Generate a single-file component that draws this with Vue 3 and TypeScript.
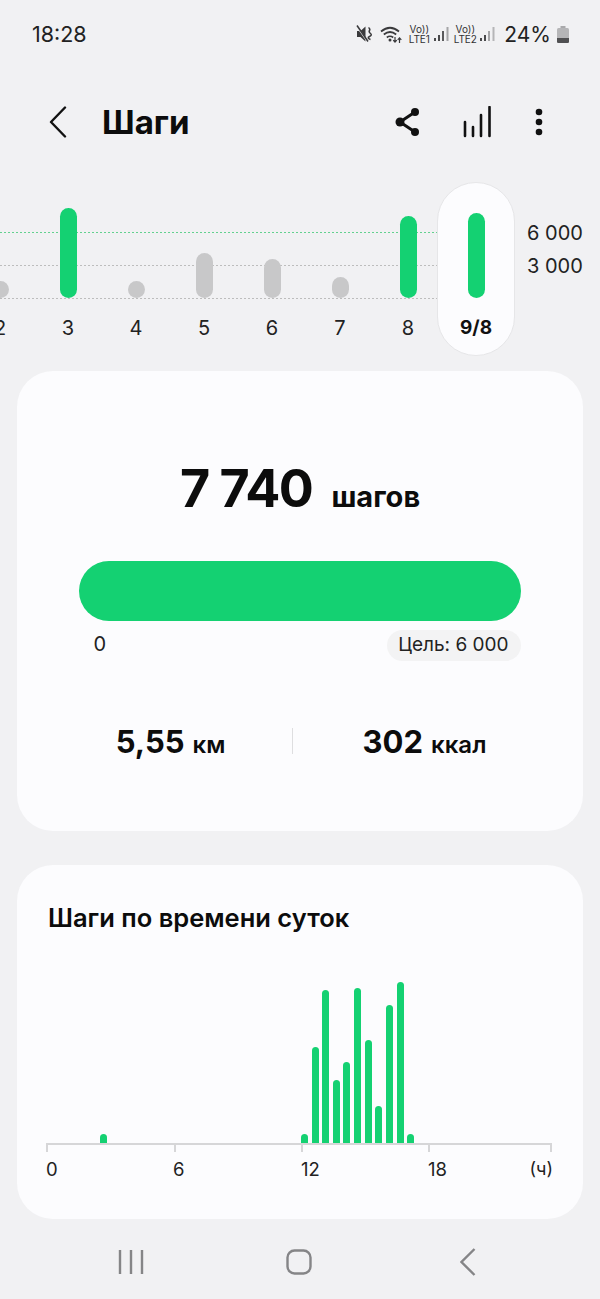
<script setup lang="ts">
interface DayBar {
  label: string
  height: number
  goal: boolean
  selected?: boolean
}

interface HourBar {
  x: number
  top: number
}

const days: DayBar[] = [
  { label: '2', height: 17, goal: false },
  { label: '3', height: 90, goal: true },
  { label: '4', height: 17, goal: false },
  { label: '5', height: 45, goal: false },
  { label: '6', height: 39, goal: false },
  { label: '7', height: 21, goal: false },
  { label: '8', height: 82, goal: true },
  { label: '9/8', height: 85, goal: true, selected: true },
]

// x is the bar centre and top its upper edge, both in page pixels
const hourBars: HourBar[] = [
  { x: 103, top: 1135 },
  { x: 304.5, top: 1135 },
  { x: 315, top: 1048 },
  { x: 325.5, top: 991 },
  { x: 336, top: 1081 },
  { x: 346.8, top: 1063 },
  { x: 357.5, top: 989 },
  { x: 368, top: 1041 },
  { x: 378.5, top: 1107 },
  { x: 389, top: 1006 },
  { x: 400, top: 983 },
  { x: 410.5, top: 1135 },
]

const AXIS_LEFT = 47
const AXIS_Y = 1144

const ticks: number[] = [47, 174.5, 302, 429, 551]
const axisLabels = [
  { text: '0', x: 46 },
  { text: '6', x: 173 },
  { text: '12', x: 301 },
  { text: '18', x: 428 },
]
</script>

<template>
  <div class="screen">
    <div class="status">
      <span class="time">18:28</span>
      <div class="status-right">
        <svg class="ic-mute" width="17" height="18" viewBox="0 0 17 18">
          <path d="M1 6h3.500l5-4.500v15l-5-4.500H1z" fill="#3a3a3c" />
          <path d="M1 1.500l10.500 15" stroke="#f1f1f3" stroke-width="1.600" />
          <path d="M1 0.500l11 16" stroke="#3a3a3c" stroke-width="1.500" />
          <path d="M12.500 2.500q2 1.500 1 3t1 3-1 3 1 3" fill="none" stroke="#3a3a3c" stroke-width="1.500" />
        </svg>
        <svg class="ic-wifi" width="23" height="19" viewBox="0 0 23 19">
          <g fill="none" stroke="#3a3a3c" stroke-width="1.700">
            <path d="M1 6.500q9-7.500 18 0" />
            <path d="M3.800 9.500q6.200-5 12.400 0" />
            <path d="M6.800 12.500q3.200-2.500 6.400 0" />
          </g>
          <circle cx="10" cy="15" r="1.500" fill="#3a3a3c" />
          <path d="M15 12v5m-1.800-1.800l1.800 2 1.800-2M19.500 18v-5m-1.800 1.800l1.800-2 1.800 2" fill="none" stroke="#3a3a3c" stroke-width="1.200" />
        </svg>
        <div class="volte">
          <span>Vo))</span>
          <span>LTE1</span>
        </div>
        <svg class="ic-signal" width="15" height="16" viewBox="0 0 15 16">
          <rect x="0" y="12" width="2" height="3" fill="#4a4a4c" />
          <rect x="4" y="9" width="2" height="6" fill="#4a4a4c" />
          <rect x="8" y="5" width="2" height="10" fill="#5a5a5c" />
          <rect x="12.500" y="1" width="2" height="14" fill="#a5a5a7" />
        </svg>
        <div class="volte volte-two">
          <span>Vo))</span>
          <span>LTE2</span>
        </div>
        <svg class="ic-signal" width="15" height="16" viewBox="0 0 15 16">
          <rect x="0" y="12" width="2" height="3" fill="#4a4a4c" />
          <rect x="4" y="9" width="2" height="6" fill="#4a4a4c" />
          <rect x="8" y="5" width="2" height="10" fill="#a5a5a7" />
          <rect x="12.500" y="1" width="2" height="14" fill="#b5b5b7" />
        </svg>
        <span class="battery-text">24%</span>
        <svg class="ic-battery" width="12" height="17" viewBox="0 0 12 17">
          <rect x="3.500" y="0" width="5" height="2" fill="#a9a9ab" />
          <rect x="0" y="2" width="12" height="15" rx="1.500" fill="#b5b5b7" />
          <path d="M0 12h12v3.500a1.500 1.500 0 0 1-1.500 1.500h-9A1.500 1.500 0 0 1 0 15.500z" fill="#505052" />
        </svg>
      </div>
    </div>

    <header class="top-bar">
      <svg class="back" width="18" height="32" viewBox="0 0 18 32">
        <path d="M16 1.500L2 16l14 14.500" fill="none" stroke="#111" stroke-width="2.400" stroke-linecap="round" stroke-linejoin="round" />
      </svg>
      <h1 class="title">Шаги</h1>
      <div class="actions">
        <svg width="26" height="30" viewBox="0 0 26 30">
          <path d="M20 5L5 15l15 10" fill="none" stroke="#111" stroke-width="3" />
          <circle cx="20" cy="5" r="4" fill="#111" />
          <circle cx="5" cy="15" r="4.500" fill="#111" />
          <circle cx="20" cy="25" r="4" fill="#111" />
        </svg>
        <svg class="ic-stats" width="28" height="32" viewBox="0 0 28 32">
          <path d="M2 30V16M10 30V21M18 30V9M26.500 30V1" fill="none" stroke="#111" stroke-width="2.600" stroke-linecap="round" />
        </svg>
        <svg class="ic-more" width="8" height="30" viewBox="0 0 8 30">
          <circle cx="4" cy="5" r="3.300" fill="#111" />
          <circle cx="4" cy="15" r="3.300" fill="#111" />
          <circle cx="4" cy="25" r="3.300" fill="#111" />
        </svg>
      </div>
    </header>

    <section class="week">
      <div class="grid-line line-goal"></div>
      <div class="grid-line line-mid"></div>
      <div class="grid-line line-base"></div>
      <span class="y-label label-goal">6 000</span>
      <span class="y-label label-mid">3 000</span>
      <div class="columns">
        <div
          v-for="day in days"
          :key="day.label"
          class="column"
          :class="{ selected: day.selected }"
        >
          <div class="bar-slot">
            <div
              class="day-bar"
              :class="{ goal: day.goal }"
              :style="{ height: day.height + 'px' }"
            ></div>
          </div>
          <span class="day-label">{{ day.label }}</span>
        </div>
      </div>
    </section>

    <section class="card summary">
      <div class="count">
        <span class="count-value">7 740</span>
        <span class="count-unit">шагов</span>
      </div>
      <div class="progress"></div>
      <div class="scale">
        <span class="scale-zero">0</span>
        <span class="target">Цель: 6 000</span>
      </div>
      <div class="stats">
        <div class="stat">
          <strong>5,55</strong>
          <span>км</span>
        </div>
        <div class="divider"></div>
        <div class="stat">
          <strong>302</strong>
          <span>ккал</span>
        </div>
      </div>
    </section>

    <section class="card hours">
      <h2 class="hours-title">Шаги по времени суток</h2>
      <div class="plot">
        <div
          v-for="bar in hourBars"
          :key="bar.x"
          class="hour-bar"
          :style="{ left: bar.x - AXIS_LEFT - 3.5 + 'px', height: AXIS_Y - bar.top + 'px' }"
        ></div>
        <div
          v-for="tick in ticks"
          :key="tick"
          class="tick"
          :style="{ left: tick - AXIS_LEFT - 1 + 'px' }"
        ></div>
      </div>
      <div class="axis-labels">
        <span
          v-for="item in axisLabels"
          :key="item.text"
          class="axis-label"
          :style="{ left: item.x - AXIS_LEFT + 'px' }"
        >{{ item.text }}</span>
        <span class="axis-unit">(ч)</span>
      </div>
    </section>

    <nav class="nav">
      <svg width="26" height="26" viewBox="0 0 26 26">
        <path d="M2 1v24M13 1v24M24 1v24" stroke="#858587" stroke-width="2.400" fill="none" />
      </svg>
      <svg class="nav-home" width="26" height="26" viewBox="0 0 26 26">
        <rect x="1.500" y="1.500" width="23" height="23" rx="7" fill="none" stroke="#858587" stroke-width="2.400" />
      </svg>
      <svg class="nav-back" width="16" height="28" viewBox="0 0 16 28">
        <path d="M14.500 1L1.500 14l13 13" fill="none" stroke="#858587" stroke-width="2.400" />
      </svg>
    </nav>
  </div>
</template>

<style>
html,
body {
  margin: 0;
  background: #f1f1f3;
}
</style>

<style scoped>
.screen {
  width: 600px;
  height: 1299px;
  overflow: hidden;
  background: #f1f1f3;
  color: #0c0c0c;
  font-family: Inter, "Noto Sans", sans-serif;
}

.status {
  height: 68px;
  display: flex;
  align-items: center;
  justify-content: space-between;
  padding: 0 31px 0 32px;
  box-sizing: border-box;
}

.time {
  font-size: 21.500px;
  color: #222;
}

.status-right {
  display: flex;
  align-items: center;
}

.ic-wifi {
  margin-left: 7px;
}

.volte {
  margin-left: 4px;
  width: 24px;
  display: flex;
  flex-direction: column;
  align-items: center;
  font-size: 10px;
  line-height: 10px;
  color: #333;
}

.volte-two {
  margin-left: 4px;
}

.ic-signal {
  margin-left: 3px;
}

.battery-text {
  margin-left: 9px;
  font-size: 21px;
  color: #222;
}

.ic-battery {
  margin-left: 6px;
}

.top-bar {
  height: 108px;
  display: flex;
  align-items: center;
  padding: 0 57px 0 49px;
}

.title {
  margin: 0 0 0 35px;
  font-size: 33px;
  font-weight: 700;
}

.actions {
  margin-left: auto;
  display: flex;
  align-items: center;
}

.ic-stats {
  margin-left: 42px;
}

.ic-more {
  margin-left: 44px;
}

.week {
  position: relative;
  height: 174px;
  margin-top: 6px;
  overflow: hidden;
}

.grid-line {
  position: absolute;
  left: 0;
  width: 438px;
  height: 1px;
  background: repeating-linear-gradient(90deg, #bdbdbd 0 2px, transparent 2px 4px);
}

.line-goal {
  top: 50px;
  background: repeating-linear-gradient(90deg, #63d18f 0 2px, transparent 2px 4px);
}

.line-mid {
  top: 83px;
}

.line-base {
  top: 116px;
}

.y-label {
  position: absolute;
  left: 527px;
  font-size: 20px;
  line-height: 24px;
  color: #222;
}

.label-goal {
  top: 39px;
}

.label-mid {
  top: 72px;
}

.columns {
  position: relative;
  display: flex;
  margin-left: -34px;
  height: 100%;
}

.column {
  position: relative;
  width: 68px;
  height: 100%;
  display: flex;
  flex-direction: column;
  align-items: center;
}

.column.selected::before {
  content: "";
  position: absolute;
  top: 0;
  left: -5px;
  width: 78px;
  height: 174px;
  box-sizing: border-box;
  border: 1px solid #e6e6e8;
  border-radius: 39px;
  background: #fcfcfe;
}

.bar-slot {
  position: relative;
  height: 116px;
  display: flex;
  align-items: flex-end;
}

.day-bar {
  width: 17px;
  border-radius: 9px;
  background: #c8c8c9;
}

.day-bar.goal {
  background: #14d172;
}

.day-label {
  position: relative;
  margin-top: 18px;
  font-size: 20px;
  line-height: 24px;
  color: #222;
}

.selected .day-label {
  font-weight: 700;
  font-size: 19px;
  color: #111;
}

.card {
  margin: 0 17px;
  background: #fcfcfe;
  border-radius: 36px;
  box-sizing: border-box;
}

.summary {
  margin-top: 15px;
  height: 460px;
  padding-top: 86px;
}

.count {
  height: 66px;
  display: flex;
  align-items: baseline;
  justify-content: center;
  gap: 19px;
  line-height: 64px;
}

.count-value {
  font-size: 52px;
  font-weight: 700;
  letter-spacing: -1.500px;
}

.count-unit {
  font-size: 29px;
  font-weight: 700;
}

.progress {
  margin: 38px 62px 0;
  height: 60px;
  border-radius: 30px;
  background: #14d172;
}

.scale {
  margin: 9px 62.500px 0;
  display: flex;
  align-items: center;
  justify-content: space-between;
  font-size: 20px;
}

.scale-zero {
  margin: -3px 0 0 14px;
  color: #222;
}

.target {
  height: 31px;
  padding: 0 12px 0 11px;
  line-height: 30px;
  border-radius: 16px;
  background: #f3f3f4;
  font-size: 19px;
  color: #222;
}

.stats {
  margin-top: 60px;
  height: 40px;
  display: grid;
  grid-template-columns: 243px 1px 1fr;
  padding: 0 27px 0 32px;
  align-items: center;
}

.stat {
  display: flex;
  align-items: baseline;
  justify-content: center;
  gap: 8px;
}

.stat strong {
  font-size: 31px;
  font-weight: 700;
}

.stat span {
  font-size: 24px;
  font-weight: 600;
}

.divider {
  height: 26px;
  background: #dedee0;
}

.hours {
  margin-top: 34px;
  height: 354px;
  padding: 36px 32px 0 30px;
}

.hours-title {
  margin: 0 0 0 1px;
  font-size: 25.500px;
  font-weight: 600;
  line-height: 34px;
}

.plot {
  position: relative;
  margin-top: 25px;
  height: 183px;
  border-bottom: 2px solid #d6d6d8;
}

.hour-bar {
  position: absolute;
  bottom: 0;
  width: 7px;
  border-radius: 3.500px 3.500px 0 0;
  background: #14d172;
}

.tick {
  position: absolute;
  top: 183px;
  width: 2px;
  height: 9px;
  background: #d6d6d8;
}

.axis-labels {
  position: relative;
  height: 30px;
  margin-top: 9px;
  font-size: 18.500px;
  line-height: 30px;
  color: #222;
}

.axis-label {
  position: absolute;
  top: 0;
}

.axis-unit {
  position: absolute;
  top: 0;
  right: -2px;
  font-size: 18px;
}

.nav {
  height: 80px;
  display: flex;
  align-items: center;
  padding: 6px 0 0 118px;
  box-sizing: border-box;
}

.nav-home {
  margin-left: 142px;
}

.nav-back {
  margin-left: 148px;
}
</style>
